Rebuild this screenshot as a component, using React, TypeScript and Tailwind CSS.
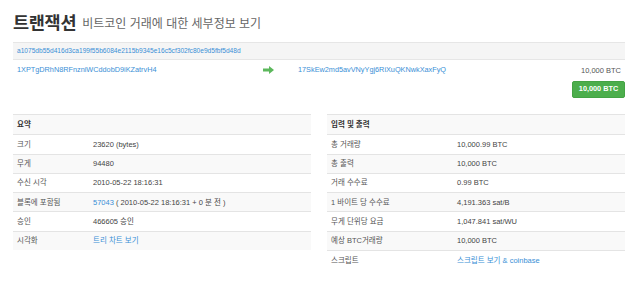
import React from 'react';

const summary: { label: string; value: React.ReactNode }[] = [
  { label: '크기', value: '23620 (bytes)' },
  { label: '무게', value: '94480' },
  { label: '수신 시각', value: '2010-05-22 18:16:31' },
  {
    label: '블록에 포함됨',
    value: (
      <>
        <span className="text-[#3a8fd6]">57043</span> ( 2010-05-22 18:16:31 + 0 분 전 )
      </>
    ),
  },
  { label: '승인', value: '466605 승인' },
  { label: '시각화', value: <span className="text-[#3a8fd6]">트리 차트 보기</span> },
];

const io: { label: string; value: React.ReactNode }[] = [
  { label: '총 거래량', value: '10,000.99 BTC' },
  { label: '총 출력', value: '10,000 BTC' },
  { label: '거래 수수료', value: '0.99 BTC' },
  { label: '1 바이트 당 수수료', value: '4,191.363 sat/B' },
  { label: '무게 단위당 요금', value: '1,047.841 sat/WU' },
  { label: '예상 BTC거래량', value: '10,000 BTC' },
  { label: '스크립트', value: <span className="text-[#3a8fd6]">스크립트 보기 &amp; coinbase</span> },
];

function InfoTable({
  title,
  rows,
  labelWidth,
}: {
  title: string;
  rows: { label: string; value: React.ReactNode }[];
  labelWidth: string;
}) {
  return (
    <div className="flex-1 flex flex-col">
      <div className="h-[20px] flex items-center px-[4px] bg-[#f9f9f9] border-t border-[#e4e4e4] font-bold text-[#333]">
        {title}
      </div>
      {rows.map((r, i) => (
        <div
          key={r.label}
          className={`h-[19.3px] flex items-center border-t border-[#e4e4e4] ${i % 2 === 1 ? 'bg-[#f9f9f9]' : 'bg-white'}`}
        >
          <div className={`${labelWidth} shrink-0 px-[4px] text-[#555]`}>{r.label}</div>
          <div className="text-[#444]">{r.value}</div>
        </div>
      ))}
    </div>
  );
}

export default function App() {
  return (
    <div className="w-[640px] h-[287px] bg-white pl-[13px] pr-[15px] font-['Liberation_Sans','Noto_Sans_CJK_KR',sans-serif] text-[7.5px] text-[#444]">
      {/* Title */}
      <div className="h-[42px] flex items-center gap-[6px] pt-[4px]">
        <span className="text-[17.5px] font-bold text-[#333] tracking-[-0.3px]">트랜잭션</span>
        <span className="text-[12px] text-[#666] mt-[2px]">비트코인 거래에 대한 세부정보 보기</span>
      </div>

      {/* Hash */}
      <div className="h-[18px] flex items-center px-[4px] bg-[#f5f5f5] border-t border-b border-[#e6e6e6] text-[6.6px] text-[#3a8fd6]">
        a1075db55d416d3ca199f55b6084e2115b9345e16c5cf302fc80e9d5fbf5d48d
      </div>

      {/* Inputs / outputs */}
      <div className="flex items-start pt-[5px]">
        <div className="w-[250px] px-[4px] text-[7.3px] text-[#3a8fd6]">1XPTgDRhN8RFnzniWCddobD9iKZatrvH4</div>
        <div className="w-[35px] flex justify-start pt-[1px]">
          <svg width="11" height="8" viewBox="0 0 11 8">
            <path d="M0 2.6 H6 V0 L11 4 L6 8 V5.4 H0 Z" fill="#5cb85c" />
          </svg>
        </div>
        <div className="flex-1 flex flex-col items-end">
          <div className="w-full flex justify-between pr-[4px]">
            <span className="text-[7.3px] text-[#3a8fd6]">17SkEw2md5avVNyYgj6RiXuQKNwkXaxFyQ</span>
            <span className="text-[#555]">10,000 BTC</span>
          </div>
          <div className="mt-[5px] w-[53px] h-[17px] rounded-[2px] bg-[#4cae4c] border border-[#44a344] text-white font-bold text-[7.3px] flex items-center justify-center">
            10,000 BTC
          </div>
        </div>
      </div>

      {/* Tables */}
      <div className="flex gap-[16px] mt-[16px]">
        <InfoTable title="요약" rows={summary} labelWidth="w-[80px]" />
        <InfoTable title="입력 및 출력" rows={io} labelWidth="w-[130px]" />
      </div>
    </div>
  );
}
